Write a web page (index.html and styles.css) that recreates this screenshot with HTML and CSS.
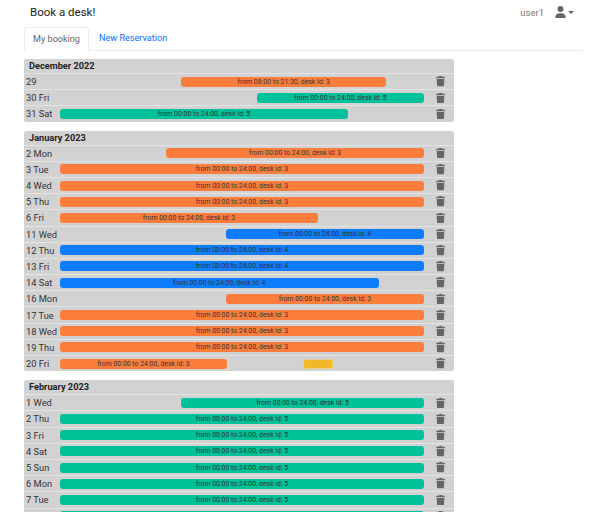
FILE: index.html
```html
<!DOCTYPE html>
<html lang="en">
<head>
    <meta charset="UTF-8" />
    <title>Book a desk!</title>
    <link rel="stylesheet" href="styles.css">
</head>
<body>
<div class="navbar">
    <div class="brand">Book a desk!</div>
    <div class="user">
        <span class="user-name">user1</span>
        <svg class="user-icon" viewBox="0 0 448 512"><path d="M224 256a128 128 0 1 0 0-256 128 128 0 1 0 0 256zm-45.700 48C79.800 304 0 383.800 0 482.300 0 498.700 13.300 512 29.700 512h388.600c16.400 0 29.700-13.300 29.700-29.700C448 383.800 368.200 304 269.700 304h-91.400z"/></svg>
        <span class="caret"></span>
    </div>
</div>

<div class="tabs">
    <div class="tab active">My booking</div>
    <div class="tab">New Reservation</div>
</div>

<svg class="defs" width="0" height="0">
    <symbol id="trash" viewBox="0 0 448 512"><path d="M135.200 17.700 128 32H32C14.300 32 0 46.300 0 64s14.300 32 32 32h384c17.700 0 32-14.300 32-32s-14.300-32-32-32h-96l-7.200-14.300C307.400 6.800 296.300 0 284.200 0H163.800c-12.100 0-23.200 6.800-28.600 17.700zM416 128H32l21.200 339c1.600 25.300 22.600 45 47.900 45h245.800c25.300 0 46.300-19.700 47.900-45L416 128z"/></symbol>
</svg>

<div class="month">
    <div class="month-title">December 2022</div>
    <div class="day"><span class="day-name">29</span><div class="track"><div class="bar orange" style="margin-left:33.33%;width:56.25%">from 08:00 to 21:30, desk id: 3</div></div><svg class="trash"><use href="#trash"/></svg></div>
    <div class="day"><span class="day-name">30 Fri</span><div class="track"><div class="bar green" style="margin-left:54%;width:46%">from 00:00 to 24:00, desk id: 5</div></div><svg class="trash"><use href="#trash"/></svg></div>
    <div class="day"><span class="day-name">31 Sat</span><div class="track"><div class="bar green" style="width:79.1%">from 00:00 to 24:00, desk id: 5</div></div><svg class="trash"><use href="#trash"/></svg></div>
</div>

<div class="month">
    <div class="month-title">January 2023</div>
    <div class="day"><span class="day-name">2 Mon</span><div class="track"><div class="bar orange" style="margin-left:29.1%;width:70.9%">from 00:00 to 24:00, desk id: 3</div></div><svg class="trash"><use href="#trash"/></svg></div>
    <div class="day"><span class="day-name">3 Tue</span><div class="track"><div class="bar orange" style="width:100%">from 00:00 to 24:00, desk id: 3</div></div><svg class="trash"><use href="#trash"/></svg></div>
    <div class="day"><span class="day-name">4 Wed</span><div class="track"><div class="bar orange" style="width:100%">from 00:00 to 24:00, desk id: 3</div></div><svg class="trash"><use href="#trash"/></svg></div>
    <div class="day"><span class="day-name">5 Thu</span><div class="track"><div class="bar orange" style="width:100%">from 00:00 to 24:00, desk id: 3</div></div><svg class="trash"><use href="#trash"/></svg></div>
    <div class="day"><span class="day-name">6 Fri</span><div class="track"><div class="bar orange" style="width:70.9%">from 00:00 to 24:00, desk id: 3</div></div><svg class="trash"><use href="#trash"/></svg></div>
    <div class="day"><span class="day-name">11 Wed</span><div class="track"><div class="bar blue" style="margin-left:45.6%;width:54.4%">from 00:00 to 24:00, desk id: 4</div></div><svg class="trash"><use href="#trash"/></svg></div>
    <div class="day"><span class="day-name">12 Thu</span><div class="track"><div class="bar blue" style="width:100%">from 00:00 to 24:00, desk id: 4</div></div><svg class="trash"><use href="#trash"/></svg></div>
    <div class="day"><span class="day-name">13 Fri</span><div class="track"><div class="bar blue" style="width:100%">from 00:00 to 24:00, desk id: 4</div></div><svg class="trash"><use href="#trash"/></svg></div>
    <div class="day"><span class="day-name">14 Sat</span><div class="track"><div class="bar blue" style="width:87.5%">from 00:00 to 24:00, desk id: 4</div></div><svg class="trash"><use href="#trash"/></svg></div>
    <div class="day"><span class="day-name">16 Mon</span><div class="track"><div class="bar orange" style="margin-left:45.6%;width:54.4%">from 00:00 to 24:00, desk id: 3</div></div><svg class="trash"><use href="#trash"/></svg></div>
    <div class="day"><span class="day-name">17 Tue</span><div class="track"><div class="bar orange" style="width:100%">from 00:00 to 24:00, desk id: 3</div></div><svg class="trash"><use href="#trash"/></svg></div>
    <div class="day"><span class="day-name">18 Wed</span><div class="track"><div class="bar orange" style="width:100%">from 00:00 to 24:00, desk id: 3</div></div><svg class="trash"><use href="#trash"/></svg></div>
    <div class="day"><span class="day-name">19 Thu</span><div class="track"><div class="bar orange" style="width:100%">from 00:00 to 24:00, desk id: 3</div></div><svg class="trash"><use href="#trash"/></svg></div>
    <div class="day"><span class="day-name">20 Fri</span><div class="track"><div class="bar orange" style="width:45.8%">from 00:00 to 24:00, desk id: 3</div><div class="bar yellow" style="margin-left:20.9%;width:8.3%"></div></div><svg class="trash"><use href="#trash"/></svg></div>
</div>

<div class="month">
    <div class="month-title">February 2023</div>
    <div class="day"><span class="day-name">1 Wed</span><div class="track"><div class="bar green" style="margin-left:33.33%;width:66.67%">from 00:00 to 24:00, desk id: 5</div></div><svg class="trash"><use href="#trash"/></svg></div>
    <div class="day"><span class="day-name">2 Thu</span><div class="track"><div class="bar green" style="width:100%">from 00:00 to 24:00, desk id: 5</div></div><svg class="trash"><use href="#trash"/></svg></div>
    <div class="day"><span class="day-name">3 Fri</span><div class="track"><div class="bar green" style="width:100%">from 00:00 to 24:00, desk id: 5</div></div><svg class="trash"><use href="#trash"/></svg></div>
    <div class="day"><span class="day-name">4 Sat</span><div class="track"><div class="bar green" style="width:100%">from 00:00 to 24:00, desk id: 5</div></div><svg class="trash"><use href="#trash"/></svg></div>
    <div class="day"><span class="day-name">5 Sun</span><div class="track"><div class="bar green" style="width:100%">from 00:00 to 24:00, desk id: 5</div></div><svg class="trash"><use href="#trash"/></svg></div>
    <div class="day"><span class="day-name">6 Mon</span><div class="track"><div class="bar green" style="width:100%">from 00:00 to 24:00, desk id: 5</div></div><svg class="trash"><use href="#trash"/></svg></div>
    <div class="day"><span class="day-name">7 Tue</span><div class="track"><div class="bar green" style="width:100%">from 00:00 to 24:00, desk id: 5</div></div><svg class="trash"><use href="#trash"/></svg></div>
    <div class="day"><span class="day-name">8 Wed</span><div class="track"><div class="bar green" style="width:100%">from 00:00 to 24:00, desk id: 5</div></div><svg class="trash"><use href="#trash"/></svg></div>
</div>
</body>
</html>
```

FILE: styles.css
```css
html, body {
    overflow: hidden;
    height: 512px;
}
body {
    margin: 0;
    padding: 0 18px 0 24px;
    background: #fff;
    color: #333;
    font-family: Roboto, "Noto Sans", sans-serif;
}
.navbar {
    display: flex;
    justify-content: space-between;
    align-items: center;
    height: 24px;
    padding: 0 8px 0 6px;
}
.brand {
    font-size: 11.500px;
    color: #222;
}
.user {
    display: flex;
    align-items: center;
}
.user-name {
    font-size: 9.500px;
    color: #777;
    margin-right: 11px;
}
.user-icon {
    width: 11px;
    height: 12px;
    fill: #666;
}
.caret {
    margin-left: 2px;
    border-top: 3px solid #666;
    border-left: 3px solid transparent;
    border-right: 3px solid transparent;
}
.tabs {
    display: flex;
    margin-top: 3px;
    height: 23px;
    border-bottom: 1px solid #e9ecef;
}
.tab {
    padding: 0 10px;
    height: 24px;
    line-height: 22px;
    font-size: 9.100px;
    color: #0d6efd;
    box-sizing: border-box;
}
.tab.active {
    color: #666;
    background: #fff;
    border: 1px solid #e9ecef;
    border-bottom: none;
    border-radius: 3px 3px 0 0;
    width: 65px;
    padding: 0;
    text-align: center;
}
.defs {
    position: absolute;
}
.month {
    width: 430px;
    margin-top: 9px;
    background: #d2d2d2;
    border-radius: 2px;
}
.tabs + .defs + .month {
    margin-top: 8px;
}
.month-title {
    height: 14px;
    line-height: 14px;
    padding-left: 5px;
    font-size: 9.200px;
    font-weight: 700;
    color: #222;
}
.day {
    display: flex;
    align-items: center;
    height: 16.200px;
    box-sizing: border-box;
    border-top: 1px solid #e4e4e4;
}
.day-name {
    flex: 0 0 36px;
    padding-left: 2px;
    box-sizing: border-box;
    font-size: 9.300px;
    white-space: nowrap;
    color: #333;
}
.track {
    display: flex;
    width: 364px;
}
.bar {
    height: 10px;
    line-height: 10px;
    flex-shrink: 0;
    border-radius: 3px;
    font-size: 6.900px;
    text-align: center;
    white-space: nowrap;
    overflow: hidden;
    color: #333;
}
.orange { background: #fd7e3c; }
.green { background: #00c29a; }
.blue { background: #0d7dfb; }
.yellow {
    background: #f2b827;
    outline: 1px dotted #f7e9b0;
    outline-offset: -1px;
}
.trash {
    width: 9px;
    height: 10.500px;
    margin-left: 12px;
    fill: #666;
}
```
